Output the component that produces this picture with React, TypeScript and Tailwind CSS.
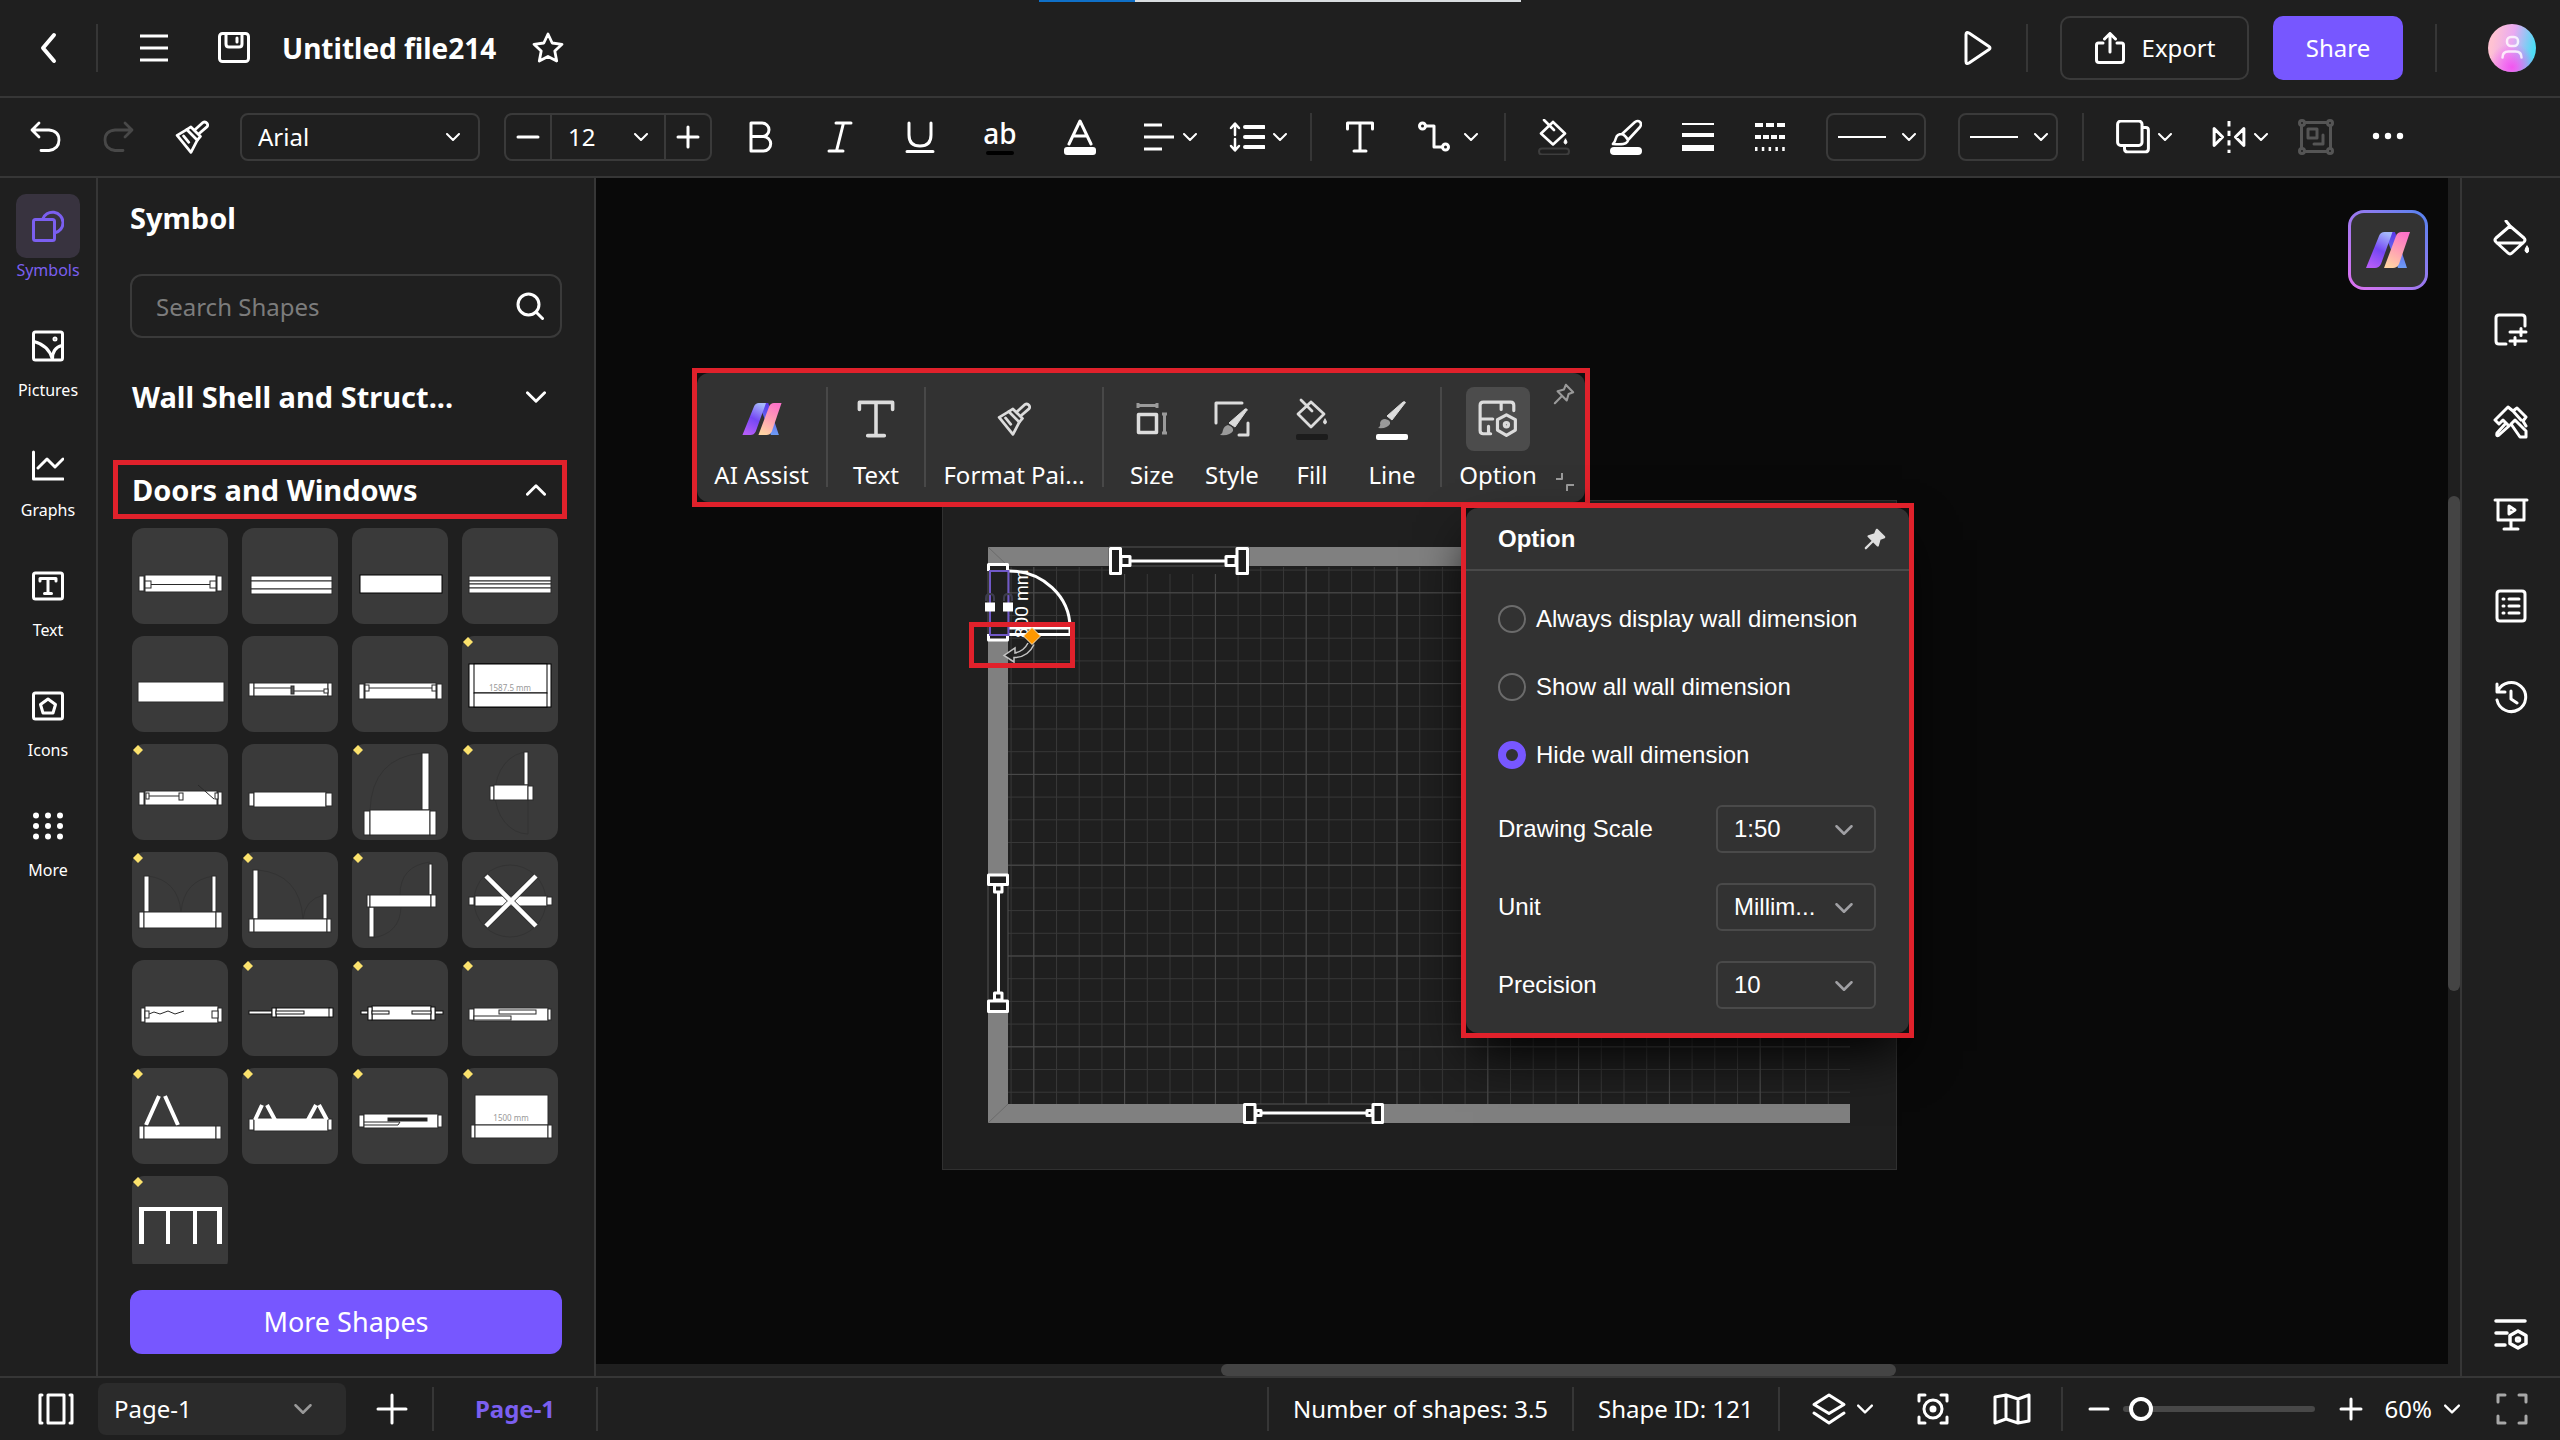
import type { ReactNode } from "react";

type IconProps = { children: ReactNode; className?: string; sw?: number; box?: string };

function Icon({ children, className = "size-8", sw = 3, box = "0 0 32 32" }: IconProps) {
  return (
    <svg
      viewBox={box}
      className={`shrink-0 ${className}`}
      fill="none"
      stroke="currentColor"
      strokeWidth={sw}
      strokeLinecap="round"
      strokeLinejoin="round"
      aria-hidden="true"
    >
      {children}
    </svg>
  );
}

function Chevron({ className = "h-2 w-3.5", up = false }: { className?: string; up?: boolean }) {
  return (
    <Icon box="0 0 14 8" sw={2} className={`pointer-events-none ${className}`}>
      <path d={up ? "M1 7 7 1l6 6" : "M1 1l6 6 6-6"} />
    </Icon>
  );
}

function Divider({ className = "h-12" }: { className?: string }) {
  return <div className={`w-0.5 shrink-0 bg-[#363636] ${className}`} />;
}

function Tool({ label, width = "w-20", children }: { label: string; width?: string; children: ReactNode }) {
  return (
    <button type="button" aria-label={label} className={`flex h-12 shrink-0 items-center justify-center gap-2 ${width}`}>
      {children}
    </button>
  );
}

function AiMark({ className, id }: { className: string; id: string }) {
  return (
    <svg viewBox="0 0 44 36" className={`shrink-0 ${className}`} aria-hidden="true">
      <defs>
        <linearGradient id={`${id}-a`} x1="0.7" y1="0" x2="0.3" y2="1">
          <stop offset="0" stopColor="#a5b8fb" />
          <stop offset="0.5" stopColor="#7547f5" />
          <stop offset="1" stopColor="#b45cf8" />
        </linearGradient>
        <linearGradient id={`${id}-b`} x1="0.7" y1="0" x2="0.3" y2="1">
          <stop offset="0" stopColor="#fb72c8" />
          <stop offset="0.5" stopColor="#ff9fb4" />
          <stop offset="1" stopColor="#ffd3a3" />
        </linearGradient>
        <linearGradient id={`${id}-c`} x1="0" y1="0" x2="0" y2="1">
          <stop offset="0" stopColor="#5a35e8" />
          <stop offset="1" stopColor="#6d9cf5" />
        </linearGradient>
      </defs>
      <path d="M24 0h5l12 36h-9L22 10z" fill={`url(#${id}-c)`} />
      <path d="M13 4q1.500-4 5.500-4h8L15 32q-2 4-6 4H0z" fill={`url(#${id}-a)`} />
      <path d="M30 4q1.500-4 5.500-4H44L33 32q-2 4-6 4h-9z" fill={`url(#${id}-b)`} />
    </svg>
  );
}

function Brush() {
  return (
    <>
      <path d="M2 14.500 11 9l10 10-6 11.500z" />
      <path d="M11 9l4-2.500 9 9-3 3.500M8 15l5 6" />
      <path d="M18.500 9.500 26 2.500q2.500-1.500 4 .500t0 3.500L22.500 13" />
    </>
  );
}

function Header() {
  return (
    <header className="relative flex h-[98px] shrink-0 items-center border-b-2 border-[#363636]">
      <div className="absolute top-0 left-[1039px] flex h-0.5 w-[482px] bg-[#d9dcdf]">
        <div className="w-24 bg-[#0f70c8]" />
      </div>
      <button type="button" aria-label="Back" className="flex w-24 justify-center">
        <Icon sw={4}>
          <path d="M22 3 11 16l11 13" />
        </Icon>
      </button>
      <Divider />
      <div className="flex items-center pl-10">
        <button type="button" aria-label="Menu" className="mr-12">
          <Icon>
            <path d="M2 4h28M2 16h28M2 28h28" strokeLinecap="butt" />
          </Icon>
        </button>
        <button type="button" aria-label="Save" className="mr-8">
          <Icon>
            <rect x="1.500" y="1.500" width="29" height="28" rx="3" />
            <path d="M8 2v10q0 3 3 3h10q3 0 3-3V2M19 6v4" />
          </Icon>
        </button>
        <h1 className="text-[28px] leading-10 font-bold">Untitled file214</h1>
        <button type="button" aria-label="Favourite" className="ml-9">
          <Icon sw={2.800}>
            <path d="m16 2 4.200 9 9.800 1.300-7.200 6.800 1.900 9.900L16 24.500 7.300 29l1.900-9.900L2 12.300 11.800 11z" />
          </Icon>
        </button>
      </div>
      <div className="ml-auto flex items-center">
        <button type="button" aria-label="Play" className="mr-8">
          <Icon className="h-9 w-8" box="0 0 32 36">
            <path d="M4 4.500q0-3 3-1.500l20 13.500q2 1.500 0 3L7 33q-3 1.500-3-1.500z" />
          </Icon>
        </button>
        <Divider />
        <button
          type="button"
          className="ml-8 flex h-16 w-[189px] items-center justify-center gap-4 rounded-[10px] border-2 border-[#3a3a3a] text-2xl"
        >
          <Icon>
            <path d="M9 11H4.500q-2 0-2 2v15q0 2.500 2.500 2.500h22q2.500 0 2.500-2.500V13q0-2-2-2H23M16 20V2M10.500 7 16 1.500 21.500 7" />
          </Icon>
          Export
        </button>
        <button type="button" className="ml-6 h-16 w-[130px] rounded-[10px] bg-[#7757ff] text-2xl">
          Share
        </button>
        <Divider className="ml-8 h-12" />
        <button type="button" aria-label="Account" className="mr-6 ml-[51px]">
          <svg viewBox="0 0 48 48" className="size-12">
            <defs>
              <linearGradient id="av" x1="0" y1="0.300" x2="1" y2="0.500">
                <stop offset="0.100" stopColor="#ffc2d2" />
                <stop offset="0.500" stopColor="#e9a9f2" />
                <stop offset="0.950" stopColor="#4fdcf5" />
              </linearGradient>
              <radialGradient id="av2" cx="0.5" cy="0.900" r="0.500">
                <stop offset="0" stopColor="#f455f0" />
                <stop offset="1" stopColor="#f455f0" stopOpacity="0" />
              </radialGradient>
            </defs>
            <circle cx="24" cy="24" r="24" fill="url(#av)" />
            <circle cx="24" cy="24" r="24" fill="url(#av2)" />
            <g fill="none" stroke="#fff" strokeOpacity="0.800" strokeWidth="2.500" strokeLinecap="round">
              <rect x="19" y="13" width="11" height="9" rx="4" />
              <path d="M14.500 33.500q0-6 6-6h7q6 0 6 6" />
            </g>
          </svg>
        </button>
      </div>
    </header>
  );
}

function LineSelect({ label }: { label: string }) {
  return (
    <button
      type="button"
      aria-label={label}
      className="flex h-12 w-[100px] shrink-0 items-center justify-between rounded-lg border-2 border-[#3a3a3a] pr-2 pl-2.5"
    >
      <span className="h-0.5 w-12 bg-white" />
      <Chevron />
    </button>
  );
}

function Toolbar() {
  return (
    <div className="flex h-20 shrink-0 items-center border-b-2 border-[#363636] pl-2.5">
      <Tool label="Undo" width="w-[72px]">
        <Icon sw={2.800}>
          <path d="M9 2 2 9l7 7M2 9h17q10 1 10 10t-10 10.500h-8" />
        </Icon>
      </Tool>
      <div className="text-[#484848]">
        <Tool label="Redo" width="w-[72px]">
          <Icon sw={2.800}>
            <path d="m23 2 7 7-7 7M30 9H13Q3 10 3 19t10 10.500h8" />
          </Icon>
        </Tool>
      </div>
      <Tool label="Format painter" width="w-[76px]">
        <Icon className="size-[34px]" sw={2.600}>
          <Brush />
        </Icon>
      </Tool>
      <div className="relative ml-2.5 shrink-0">
        <select
          aria-label="Font family"
          className="h-12 w-60 appearance-none rounded-lg border-2 border-[#3a3a3a] bg-transparent px-4 text-2xl"
        >
          <option>Arial</option>
        </select>
        <Chevron className="absolute top-5 right-5 h-2 w-3.5" />
      </div>
      <div className="ml-6 flex h-12 w-[208px] shrink-0 items-stretch rounded-lg border-2 border-[#3a3a3a]">
        <button type="button" aria-label="Smaller" className="flex w-11 items-center justify-center">
          <Icon className="size-6" box="0 0 24 24">
            <path d="M2 12h20" />
          </Icon>
        </button>
        <div className="relative flex-1 border-x-2 border-[#3a3a3a]">
          <select aria-label="Font size" className="h-full w-full appearance-none bg-transparent pl-4 text-2xl">
            <option>12</option>
          </select>
          <Chevron className="absolute top-[18px] right-4 h-2 w-3.5" />
        </div>
        <button type="button" aria-label="Larger" className="flex w-11 items-center justify-center">
          <Icon className="size-6" box="0 0 24 24">
            <path d="M2 12h20M12 2v20" />
          </Icon>
        </button>
      </div>
      <div className="ml-2 flex">
        <Tool label="Bold">
          <Icon>
            <path d="M7 2h11a7 6.800 0 0 1 0 13.600H7zM7 15.600h12.500a7 7 0 0 1 0 14.400H7z" />
          </Icon>
        </Tool>
        <Tool label="Italic">
          <Icon>
            <path d="M12 2h15M5 30h14M19.500 2l-7 28" />
          </Icon>
        </Tool>
        <Tool label="Underline">
          <Icon>
            <path d="M5 2v12q0 11 11 11t11-11V2M3 30.500h26" />
          </Icon>
        </Tool>
        <Tool label="Highlight">
          <span className="flex h-9 flex-col items-center justify-between">
            <span className="text-[28px] leading-7 font-medium">ab</span>
            <span className="h-1 w-7 rounded-sm bg-black" />
          </span>
        </Tool>
        <Tool label="Font color">
          <Icon className="h-9 w-8" box="0 0 32 36">
            <path d="M5 25 16 2l11 23M9.500 17h13" />
            <rect x="0" y="28" width="32" height="8" rx="3" fill="currentColor" stroke="none" />
          </Icon>
        </Tool>
      </div>
      <div className="ml-1.5 flex">
        <Tool label="Align" width="w-[88px]">
          <Icon>
            <path d="M1 4h18M1 16h30M1 28h18" strokeLinecap="butt" />
          </Icon>
          <Chevron />
        </Tool>
        <Tool label="Line spacing" width="w-[88px]">
          <Icon className="h-8 w-9" box="0 0 36 32">
            <path d="M16 6h19M16 16h19M16 26h19" strokeWidth="4" />
            <path d="M6 14V3M2 7l4-4.500L10 7M6 18v11M2 25l4 4.500 4-4.500" strokeWidth="2.500" />
          </Icon>
          <Chevron />
        </Tool>
      </div>
      <Divider className="ml-2 h-12" />
      <div className="ml-2 flex">
        <Tool label="Text">
          <Icon>
            <path d="M3.500 8V2h25v6M16 2v28M10 30h12" />
          </Icon>
        </Tool>
        <Tool label="Connector" width="w-24">
          <Icon className="mr-1.5 size-8">
            <circle cx="4.500" cy="5" r="3" />
            <circle cx="27.500" cy="26" r="3" />
            <path d="M8 5h8v21h8" />
          </Icon>
          <Chevron />
        </Tool>
      </div>
      <Divider className="ml-2 h-12" />
      <div className="ml-3 flex">
        <Tool label="Fill" width="w-[72px]">
          <Icon className="h-9 w-8" box="0 0 32 36" sw={2.600}>
            <path d="M15 3 27 14.500 15 25.500 3 14.500 15 3M6 1l10 10" />
            <path d="M27.500 20q3 4 0 5-3-1 0-5" fill="currentColor" strokeWidth="1" />
            <rect x="1" y="29.500" width="30" height="6" rx="3" stroke="#3d3d3d" strokeWidth="2" />
          </Icon>
        </Tool>
        <Tool label="Line color" width="w-[72px]">
          <Icon className="h-9 w-8" box="0 0 32 36" sw={2.600}>
            <path d="M12 15 25 3q3-2 5 0t0 5L18 21M12 15q3 1 6 6M12 15q-5 0-6 4-1 4-3 6 10 1 13-1 2-1 2-3" />
            <rect x="0" y="28" width="32" height="8" rx="4" fill="currentColor" stroke="none" />
          </Icon>
        </Tool>
        <Tool label="Line weight" width="w-[72px]">
          <Icon>
            <g strokeLinecap="butt">
              <path d="M0 3h32" strokeWidth="2" />
              <path d="M0 14h32" strokeWidth="4" />
              <path d="M0 27h32" strokeWidth="6" />
            </g>
          </Icon>
        </Tool>
        <Tool label="Line style" width="w-[72px]">
          <Icon sw={4}>
            <g strokeLinecap="butt">
              <path d="M1 4h30" strokeDasharray="8 3" />
              <path d="M1 16h30" strokeDasharray="6 2" />
              <path d="M1 28h30" strokeDasharray="2.500 4.300" />
            </g>
          </Icon>
        </Tool>
      </div>
      <div className="ml-5 flex gap-8">
        <LineSelect label="Line type" />
        <LineSelect label="Arrow type" />
      </div>
      <Divider className="ml-6 h-12" />
      <div className="ml-3 flex">
        <Tool label="Arrange" width="w-24">
          <Icon className="size-[34px]" sw={2.800}>
            <rect x="1.500" y="1" width="23" height="23" rx="3" />
            <path d="M25 7h3q2.500 0 2.500 2.500V27q0 3-3 3H11q-3 0-3-3v-2.500" />
          </Icon>
          <Chevron />
        </Tool>
        <Tool label="Flip" width="w-24">
          <Icon className="size-[34px]" sw={2.800}>
            <path d="M2 8v16l8-8zM30 8v16l-8-8z" />
            <path d="M16 1v30" strokeDasharray="5 4" strokeLinecap="butt" />
          </Icon>
          <Chevron />
        </Tool>
        <span className="text-[#555]">
          <Tool label="Group" width="w-14">
            <Icon className="size-9" box="0 0 36 36">
              <path d="M7 3.500h22M7 32.500h22M3.500 7v22M32.500 7v22" />
              <circle cx="4" cy="4" r="2.500" />
              <circle cx="32" cy="4" r="2.500" />
              <circle cx="4" cy="32" r="2.500" />
              <circle cx="32" cy="32" r="2.500" />
              <path d="M10 10h9v9h-9zM25 16v9h-9" />
            </Icon>
          </Tool>
        </span>
        <Tool label="More tools" width="w-[88px]">
          <Icon>
            <g fill="currentColor" stroke="none">
              <circle cx="4" cy="15" r="3.200" />
              <circle cx="16" cy="15" r="3.200" />
              <circle cx="28" cy="15" r="3.200" />
            </g>
          </Icon>
        </Tool>
      </div>
    </div>
  );
}

const railItems: { label: string; active?: boolean; icon: ReactNode }[] = [
  {
    label: "Symbols",
    active: true,
    icon: (
      <>
        <rect x="1.500" y="9.500" width="21" height="21" rx="2" />
        <path d="M10.500 9.500A10.500 10.500 0 1 1 22.500 23" />
      </>
    ),
  },
  {
    label: "Pictures",
    icon: (
      <>
        <rect x="1.500" y="2" width="29" height="28" rx="2" />
        <path d="M2 11.500q15 4 18.500 18Q20 18 30 15.500" />
        <circle cx="23" cy="9" r="1" />
      </>
    ),
  },
  { label: "Graphs", icon: <path d="M1.500 2v27H31M6 18l9-9 8 8 8-8" /> },
  {
    label: "Text",
    icon: (
      <>
        <rect x="1.500" y="3" width="29" height="26" rx="2" />
        <path d="M8 11V8.500h16V11M16 8.500v15M12.500 23.500h7" />
      </>
    ),
  },
  {
    label: "Icons",
    icon: (
      <>
        <rect x="1.500" y="3" width="29" height="26" rx="2" />
        <path d="m16 9 7.500 5.500L21 23H11l-2.500-8.500z" />
      </>
    ),
  },
  {
    label: "More",
    icon: (
      <g fill="currentColor" stroke="none">
        {[4, 16, 28].map((x) => [5.500, 16, 26.500].map((y) => <circle key={`${x}-${y}`} cx={x} cy={y} r="3" />))}
      </g>
    ),
  },
];

function Rail() {
  return (
    <nav className="flex w-[98px] shrink-0 flex-col border-r-2 border-[#363636] pt-4">
      {railItems.map((it) => (
        <button
          type="button"
          key={it.label}
          className={`flex h-[120px] flex-col items-center text-base ${it.active ? "text-[#7b5ff0]" : "text-white"}`}
        >
          <span className={`flex size-16 items-center justify-center rounded-[10px] ${it.active ? "bg-[#38333f]" : ""}`}>
            <Icon>{it.icon}</Icon>
          </span>
          {it.label}
        </button>
      ))}
    </nav>
  );
}

type BoxSpec = [number, number, number, number];

function Boxes({ list, stroke = "#2a2a2a" }: { list: BoxSpec[]; stroke?: string }) {
  return (
    <>
      {list.map(([x1, y1, x2, y2], i) => (
        <rect key={i} x={x1} y={y1} width={x2 - x1} height={y2 - y1} fill="#fff" stroke={stroke} />
      ))}
    </>
  );
}

const faint = "#333";

const symbols: { name: string; tag?: boolean; art: ReactNode }[] = [
  {
    name: "Window",
    art: (
      <>
        <Boxes list={[[7, 48, 12, 63], [13, 47, 84, 64], [85, 48, 90, 63], [13, 53, 19, 60], [78, 53, 84, 60]]} />
        <path d="M19 56.500h59" />
      </>
    ),
  },
  { name: "Glazed wall", art: <Boxes list={[[9, 48, 90, 53], [9, 53, 90, 61], [9, 61, 90, 66]]} /> },
  { name: "Opening", art: <Boxes stroke="#000" list={[[8, 47, 90, 65]]} /> },
  { name: "Casement", art: <Boxes list={[[7, 48, 89, 53], [7, 53, 89, 56], [7, 56, 89, 60], [7, 60, 89, 65]]} /> },
  { name: "Wall opening", art: <Boxes list={[[6, 46, 92, 66]]} /> },
  {
    name: "Sliding window",
    art: (
      <>
        <Boxes list={[[7, 47, 12, 60], [12, 47, 86, 60], [86, 47, 90, 60], [82, 53, 86, 57]]} />
        <path d="M12 52h37M52 55h30" />
        <rect x="49" y="50" width="3" height="8" fill="#555" />
      </>
    ),
  },
  {
    name: "Bay window",
    art: (
      <>
        <Boxes list={[[7, 48, 12, 63], [13, 47, 84, 63], [85, 48, 90, 63], [13, 49, 17, 55], [80, 49, 84, 55]]} />
        <path d="M17 52h63" />
      </>
    ),
  },
  {
    name: "Garage window",
    tag: true,
    art: (
      <>
        <Boxes stroke="#000" list={[[7, 28, 89, 71], [12, 28, 85, 57], [12, 57, 85, 71]]} />
        <text x="48" y="55" textAnchor="middle" fontSize="8" fill="#999" stroke="none">1587.5 mm</text>
      </>
    ),
  },
  {
    name: "Tilt window",
    tag: true,
    art: (
      <>
        <Boxes list={[[7, 48, 12, 61], [13, 47, 85, 61], [86, 48, 90, 61], [14, 49, 17, 55], [47, 49, 51, 56], [83, 49, 86, 55]]} />
        <path d="M17 52h30M66 41l16 14" />
      </>
    ),
  },
  { name: "Plain window", art: <Boxes list={[[7, 49, 12, 62], [12, 48, 84, 63], [84, 49, 90, 62]]} /> },
  {
    name: "Door",
    tag: true,
    art: (
      <>
        <path d="M70 9Q20 14 18 66" stroke={faint} />
        <Boxes list={[[70, 9, 77, 66], [12, 67, 18, 91], [18, 66, 78, 91], [78, 67, 84, 91]]} />
      </>
    ),
  },
  {
    name: "Swing door",
    tag: true,
    art: (
      <>
        <path d="M66 8A33 41 0 0 0 66 90V56" stroke={faint} />
        <Boxes list={[[62, 8, 66, 41], [28, 42, 32, 56], [32, 41, 66, 56], [66, 42, 71, 56]]} />
      </>
    ),
  },
  {
    name: "Double door",
    tag: true,
    art: (
      <>
        <path d="M16 24q30 4 33 36 3-32 33-36" stroke={faint} />
        <Boxes list={[[12, 24, 17, 60], [80, 24, 84, 60], [7, 60, 12, 76], [12, 60, 84, 76], [84, 60, 90, 76]]} />
      </>
    ),
  },
  {
    name: "Uneven double door",
    tag: true,
    art: (
      <>
        <path d="M16 18q42 4 45 49 2-20 21-24" stroke={faint} />
        <Boxes list={[[11, 18, 16, 67], [81, 42, 85, 67], [7, 67, 12, 80], [12, 67, 85, 80], [85, 67, 89, 80]]} />
      </>
    ),
  },
  {
    name: "Opposing door",
    tag: true,
    art: (
      <>
        <path d="M78 10Q48 14 48 43M20 86q28-4 29-31" stroke={faint} />
        <Boxes list={[[77, 12, 80, 43], [17, 55, 22, 85], [15, 43, 18, 55], [18, 43, 79, 55], [79, 43, 84, 55]]} />
      </>
    ),
  },
  {
    name: "Revolving door",
    art: (
      <>
        <circle cx="48" cy="49" r="36" stroke={faint} />
        <Boxes list={[[7, 45, 12, 53], [13, 44, 85, 54], [85, 45, 90, 53]]} />
        <path d="m24 24 50 50M74 24 24 74" stroke="#333" strokeWidth="6" />
        <path d="m24 24 50 50M74 24 24 74" stroke="#fff" strokeWidth="4.500" />
      </>
    ),
  },
  {
    name: "Folding screen",
    art: (
      <>
        <Boxes list={[[9, 48, 13, 62], [13, 46, 86, 63], [86, 48, 90, 62], [13, 51, 17, 58], [80, 51, 86, 58]]} />
        <path d="m17 54 5-2 6 2 8-3 7 3 9-3" />
      </>
    ),
  },
  {
    name: "Pocket door",
    tag: true,
    art: <Boxes stroke="#111" list={[[7, 51, 30, 54], [34, 48, 88, 57], [30, 48, 34, 57], [34, 51, 62, 54], [87, 48, 91, 57]]} />,
  },
  {
    name: "Double pocket door",
    tag: true,
    art: (
      <Boxes
        stroke="#111"
        list={[[9, 51, 16, 54], [83, 51, 91, 54], [20, 46, 79, 60], [16, 47, 20, 60], [79, 47, 83, 60], [20, 51, 37, 54], [60, 51, 79, 54]]}
      />
    ),
  },
  {
    name: "Sliding door",
    tag: true,
    art: <Boxes list={[[7, 49, 12, 60], [12, 48, 86, 61], [86, 49, 89, 60], [37, 50, 74, 54], [12, 56, 49, 60]]} />,
  },
  {
    name: "Folding door",
    tag: true,
    art: (
      <>
        <path d="m14 57 13-29M33 28l13 29" stroke="#fff" strokeWidth="4" />
        <Boxes list={[[7, 58, 12, 71], [12, 58, 84, 71], [84, 58, 89, 71]]} />
      </>
    ),
  },
  {
    name: "Double folding door",
    tag: true,
    art: (
      <>
        <Boxes list={[[7, 51, 12, 62], [12, 50, 86, 63], [86, 51, 90, 62]]} />
        <path d="m13 52 7-15M25 37l8 15M66 52l8-15M77 37l8 15" stroke="#fff" strokeWidth="4" />
      </>
    ),
  },
  {
    name: "Bypass door",
    tag: true,
    art: (
      <>
        <Boxes list={[[7, 47, 12, 59], [12, 46, 86, 60], [86, 47, 90, 59]]} />
        <rect x="36" y="50" width="39" height="3" fill="#222" />
        <path d="M12 54h36l-2 3H12" />
      </>
    ),
  },
  {
    name: "Garage door",
    tag: true,
    art: (
      <>
        <Boxes list={[[13, 27, 86, 57], [9, 57, 13, 70], [13, 57, 86, 70], [86, 57, 90, 70]]} />
        <text x="49" y="53" textAnchor="middle" fontSize="8" fill="#999" stroke="none">1500 mm</text>
      </>
    ),
  },
  {
    name: "Folding partition",
    tag: true,
    art: <path d="M7 31h83v37h-5V35H65v33h-4V35H38v33h-4V35H12v33H7z" fill="#fff" stroke="none" />,
  },
];

function SymbolPanel() {
  return (
    <aside className="flex w-[498px] shrink-0 flex-col border-r-2 border-[#363636] px-8">
      <h2 className="mt-5 text-[29px] leading-10 font-bold">Symbol</h2>
      <div className="relative mt-9">
        <input
          type="search"
          aria-label="Search Shapes"
          placeholder="Search Shapes"
          className="h-16 w-full rounded-xl border-2 border-[#3a3a3a] bg-transparent px-6 text-2xl placeholder:text-[#7c7c7c]"
        />
        <Icon className="absolute top-[18px] right-[18px] size-7" box="0 0 28 28">
          <circle cx="12.500" cy="12.500" r="10.500" />
          <path d="m20.500 20.500 6 6" />
        </Icon>
      </div>
      <button type="button" className="mt-7 -mr-1 -ml-[17px] flex h-[62px] shrink-0 items-center justify-between pr-5 pl-[19px] text-[29px] font-bold">
        Wall Shell and Struct...
        <Chevron className="h-3 w-5" />
      </button>
      <button
        type="button"
        className="mt-8 -mr-[5px] -ml-[17px] flex h-[59px] shrink-0 items-center justify-between border-[5px] border-[#e0212b] pr-4 pl-3.5 text-[29px] font-bold"
      >
        Doors and Windows
        <Chevron up className="h-3 w-5" />
      </button>
      <div className="mt-[9px] ml-0.5 grid h-[736px] shrink-0 grid-cols-[repeat(4,96px)] content-start gap-x-3.5 gap-y-3 overflow-hidden">
        {symbols.map((s) => (
          <button type="button" key={s.name} aria-label={s.name} className="size-24 rounded-xl bg-[#3a3a3a]">
            <svg viewBox="0 0 96 96" className="size-24" fill="none" stroke="#2a2a2a">
              {s.art}
              {s.tag && <path d="m6 1 5 5-5 5-5-5z" fill="#fbe26c" stroke="none" />}
            </svg>
          </button>
        ))}
      </div>
      <button type="button" className="mt-[26px] h-16 shrink-0 rounded-xl bg-[#7757ff] text-[27px]">
        More Shapes
      </button>
    </aside>
  );
}

function FloorPlan() {
  return (
    <svg viewBox="596 178 1864 1198" preserveAspectRatio="xMinYMin meet" className="absolute inset-0 h-full w-full" fill="none">
      <defs>
        <pattern id="minor" x="1033.300" y="592.300" width="22.700" height="22.700" patternUnits="userSpaceOnUse">
          <path d="M0 0H22.700M0 0V22.700" stroke="#373737" strokeWidth="2" />
        </pattern>
        <pattern id="major" x="1033.300" y="592.300" width="90.800" height="90.800" patternUnits="userSpaceOnUse">
          <path d="M0 0H90.800M0 0V90.800" stroke="#4a4a4a" strokeWidth="2" />
        </pattern>
      </defs>
      <rect x="942.500" y="500.500" width="954" height="669" fill="#1f1f1f" stroke="#303030" />
      <rect x="1008" y="567" width="842" height="537" fill="url(#minor)" />
      <rect x="1008" y="567" width="842" height="537" fill="url(#major)" />
      <path d="M1850 547H988v576h862v-19H1008V566h842z" fill="#808080" />
      <path d="m988 547 20 19M988 1123l20-19" stroke="#6b6b6b" />
      <path d="M1109 547h140v19h-140zM988 875h20v137h-20zM1245 1104h138v19h-138zM988 566h20v73h-20z" fill="#1f1f1f" stroke="#555" />
      <path d="M1120 567h117v7h-117z" fill="#1f1f1f" />
      <g stroke="#fff" strokeWidth="3" fill="#1f1f1f" strokeLinejoin="round">
        <path d="M1110.500 548.500h10v25h-10zM1121 556.500h9v9h-9zM1131 561h95M1226 556.500h10v9h-10zM1237 548.500h10.500v25H1237z" />
        <path d="M988.500 875h19v9.500h-19zM994.500 885h7.500v7h-7.500zM998.500 893v100M994.500 993h7.500v7h-7.500zM988.500 1001h19v10.500h-19z" />
        <path d="M1244.500 1104.500h10.500v18h-10.500zM1256 1110.500h5v5h-5zM1261 1113h106M1367 1110.500h5v5h-5zM1373 1104.500h9.500v18h-9.500z" />
        <path d="M988.500 571v-6.500h19v6.500M988.500 634v6h19v-6" />
        <path d="M1009 571A61 57 0 0 1 1070 628M1008 628h62v6.500h-62" fill="none" />
      </g>
      <text
        x="0"
        y="0"
        transform="translate(1028 638) rotate(-90)"
        fill="#fff"
        fontSize="19"
        className="font-['Liberation_Sans',sans-serif]"
      >
        800 mm
      </text>
      <rect x="990" y="571" width="18.500" height="64" stroke="#7058c8" strokeWidth="2" />
      <path d="M986 601v-3q0-4 4-4t4 4v3M1004 601v-3q0-4 4-4t4 4v3" stroke="#3d3d4d" strokeWidth="2" />
      <path d="M985 602.500h10v9h-10zM1003 602.500h10v9h-10z" fill="#fff" />
      <path d="M1028 643q-4 8-13 10v-5l-11 7.500 10 6.500v-4.500q14 0 20-13" fill="#222" stroke="#c4c4c4" strokeWidth="1.500" />
      <path d="m1032 627.500 8.500 8.500-8.500 8.500-8.500-8.500z" fill="#ff9800" stroke="#ffe7c2" />
      <rect x="971.500" y="624.500" width="101" height="41" stroke="#e0212b" strokeWidth="5" />
    </svg>
  );
}

function QuickItem({ label, width = "w-20", tile = "", children }: { label: string; width?: string; tile?: string; children: ReactNode }) {
  return (
    <button type="button" className={`flex shrink-0 flex-col items-center pt-3.5 text-2xl whitespace-nowrap ${width}`}>
      <span className={`flex size-16 items-center justify-center rounded-lg text-[#dcdcdc] ${tile}`}>{children}</span>
      <span className="mt-2">{label}</span>
    </button>
  );
}

function QuickBar() {
  return (
    <div className="absolute top-[190px] left-24 z-10 flex h-[139px] w-[898px] border-[5px] border-[#e0212b] bg-[#111]">
      <div className="relative flex flex-1 rounded-xl bg-[#323232]">
        <QuickItem label="AI Assist" width="w-[129px]">
          <AiMark id="q" className="h-8 w-10" />
        </QuickItem>
        <Divider className="mt-3.5 h-[100px] bg-[#484848]" />
        <QuickItem label="Text" width="w-24">
          <Icon className="size-[38px]">
            <path d="M2 8V2h28v6M16 2v28M9 30h14" />
          </Icon>
        </QuickItem>
        <Divider className="mt-3.5 h-[100px] bg-[#484848]" />
        <QuickItem label="Format Pai..." width="w-[176px]">
          <Icon className="size-[34px]" sw={2.600}>
            <Brush />
          </Icon>
        </QuickItem>
        <Divider className="mt-3.5 mr-2 h-[100px] bg-[#484848]" />
        <QuickItem label="Size">
          <Icon className="h-[34px] w-8" box="0 0 32 34">
            <path d="M2.500 12.500h18v18h-18z" strokeWidth="3.500" />
            <path d="M2 1v5M21 1v5M2 3.500h19M26 12h5M26 31h5M28.500 12v19" stroke="#9a9a9a" strokeLinecap="butt" />
          </Icon>
        </QuickItem>
        <QuickItem label="Style">
          <Icon className="size-9" box="0 0 36 36">
            <path d="M2 22V2h26M34 22v12H25" />
            <path d="M33 9 21 26l-6-4L31 8q2-1 2 1z" fill="currentColor" strokeWidth="1" />
            <path d="M14 24q6 2 5 6-3 5-13 4 3-2 3-5 1-4 5-5z" fill="#9a9a9a" stroke="none" />
          </Icon>
        </QuickItem>
        <QuickItem label="Fill">
          <Icon className="h-11 w-9" box="0 0 34 44" sw={2.800}>
            <path d="M16 5 29 17 16 30 3 17 16 5M6 3l11 11" />
            <path d="M30 22q3 4 0 5-3-1 0-5" fill="currentColor" strokeWidth="1" />
            <rect x="1" y="37" width="32" height="6" rx="2" fill="#1c1c1c" stroke="none" />
          </Icon>
        </QuickItem>
        <QuickItem label="Line">
          <Icon className="h-11 w-9" box="0 0 34 44">
            <path d="M30 6 17 23l-5-4L28 5q3-1 2 1z" fill="currentColor" strokeWidth="1" />
            <path d="M10 22q6 1 5 5-3 5-12 4 3-2 2-5 1-4 5-4z" fill="#9a9a9a" stroke="none" />
            <rect x="1" y="37" width="32" height="6" rx="2" fill="#fff" stroke="none" />
          </Icon>
        </QuickItem>
        <Divider className="mt-3.5 ml-2 h-[100px] bg-[#484848]" />
        <QuickItem label="Option" width="w-28" tile="bg-[#4c4c4c]">
          <Icon className="size-10" box="0 0 38 36">
            <path d="M12 32H5q-3 0-3-3V5q0-3 3-3h26q3 0 3 3v5M22 2v7M2 18h12M10 25v7" />
            <path d="m27 14 8.500 4.500v10L27 33.500l-8.500-5v-10z" />
            <circle cx="27" cy="23.500" r="2" />
          </Icon>
        </QuickItem>
        <button type="button" aria-label="Pin toolbar" className="absolute top-2.5 right-2.5 text-[#9a9a9a]">
          <Icon className="size-[22px]" box="0 0 24 24" sw={2.300}>
            <path d="m14 2 8 8-5 2-2 7-10-10 7-2zM9 15l-7 7" />
          </Icon>
        </button>
        <Icon className="absolute right-2.5 bottom-2.5 size-5 text-[#9a9a9a]" box="0 0 20 20" sw={2}>
          <path d="M7 1v6H1M12 19v-6h7" strokeLinecap="butt" />
        </Icon>
      </div>
    </div>
  );
}

function OptionSelect({ label, value }: { label: string; value: string }) {
  return (
    <label className="flex h-[78px] items-center justify-between">
      {label}
      <span className="relative">
        <select className="h-12 w-40 appearance-none rounded-md border-2 border-[#4a4a4a] bg-transparent px-4">
          <option>{value}</option>
        </select>
        <Chevron className="absolute top-5 right-[23px] h-2.5 w-[18px] text-[#a0a0a4]" />
      </span>
    </label>
  );
}

function OptionPanel() {
  const radios = ["Always display wall dimension", "Show all wall dimension", "Hide wall dimension"];
  return (
    <section className="absolute top-[325px] left-[865px] z-20 h-[535px] w-[453px] border-[5px] border-[#e0212b] bg-[#111] font-['Liberation_Sans',sans-serif] text-2xl shadow-2xl shadow-black">
      <div className="flex h-full flex-col rounded-xl bg-[#323232]">
        <div className="flex h-[63px] shrink-0 items-center justify-between border-b-2 border-[#4a4a4a] pr-[23px] pl-8">
          <h2 className="font-bold">Option</h2>
          <button type="button" aria-label="Pin panel" className="text-[#dedede]">
            <Icon className="size-[22px]" box="0 0 24 24" sw={2.500}>
              <path d="m14 2 8 8-5 2-2 7-10-10 7-2z" fill="currentColor" />
              <path d="m9 15-7 7" />
            </Icon>
          </button>
        </div>
        <div className="flex flex-col pt-3.5">
          {radios.map((r, i) => (
            <label key={r} className="flex h-[68px] items-center gap-2.5 pl-8">
              <input
                type="radio"
                name="dimension"
                defaultChecked={i === 2}
                className="size-7 shrink-0 appearance-none rounded-full border-2 border-[#6b6b6b] checked:border-8 checked:border-[#7757ff]"
              />
              {r}
            </label>
          ))}
        </div>
        <div className="flex flex-col pt-px pr-[33px] pl-8">
          <OptionSelect label="Drawing Scale" value="1:50" />
          <OptionSelect label="Unit" value="Millim..." />
          <OptionSelect label="Precision" value="10" />
        </div>
      </div>
    </section>
  );
}

const sideItems: { label: string; icon: ReactNode }[] = [
  {
    label: "Theme",
    icon: (
      <>
        <path d="M13 1l4 5M17 6 3 18q-2 2 0 4l12 11q2 2 4 0l12-11q2-2 0-4zM4 23h26" />
        <path d="M34 26q4 5 0 7-4-2 0-7" fill="currentColor" strokeWidth="1" />
      </>
    ),
  },
  {
    label: "Layout",
    icon: <path d="M13 32H6q-3 0-3-3V6q0-3 3-3h23q3 0 3 3v8M17 20h16M28 16.500v7M17 29h16M22 25.500v7" />,
  },
  {
    label: "Style",
    icon: <path d="M2 16 15 3l5 4 4-3 9 9-3 4 3 5M2 16l4 4 4-4 6 6L6 31q-3 2-2-2l9-10M20 7l8 9M18 20l4-4 11 11v6h-6z" />,
  },
  { label: "Present", icon: <path d="M2 4h32M5 4v20h26V4M18 24v9M11 33h14M16 10v8l6-4z" /> },
  {
    label: "Notes",
    icon: <path d="M7 3h22q3 0 3 3v24q0 3-3 3H7q-3 0-3-3V6q0-3 3-3zM10 11h1M16 11h10M10 18h1M16 18h10M10 25h1M16 25h10" />,
  },
  { label: "History", icon: <path d="M5 11A14.500 14.500 0 1 1 4 20M4 4v8h8M18 11v8l6 4" /> },
];

function SideRail() {
  return (
    <nav className="flex w-[100px] shrink-0 flex-col items-center border-l-2 border-[#363636] pt-3.5">
      {sideItems.map((s) => (
        <button type="button" key={s.label} aria-label={s.label} className="flex h-[92px] w-full items-center justify-center">
          <Icon className="size-9" box="0 0 36 36">
            {s.icon}
          </Icon>
        </button>
      ))}
      <button type="button" aria-label="Settings" className="mt-auto mb-6">
        <Icon className="size-9" box="0 0 36 36" sw={3.500}>
          <path d="M3 5h29M3 17h11M3 29h9" />
          <path d="m25 15 8 4.500v8L25 32l-8-4.500v-8z" />
          <circle cx="25" cy="23.500" r="1.500" />
        </Icon>
      </button>
    </nav>
  );
}

function Canvas() {
  return (
    <main className="relative flex-1 overflow-hidden bg-[#090909]">
      <FloorPlan />
      <QuickBar />
      <OptionPanel />
      <button
        type="button"
        aria-label="AI assistant"
        className="absolute top-8 right-8 size-20 rounded-2xl bg-linear-to-tr from-[#e070f0] via-[#9a78f0] to-[#4f83f0] p-[3px]"
      >
        <span className="flex h-full w-full items-center justify-center rounded-[13px] bg-[#333]">
          <AiMark id="c" className="h-9 w-11" />
        </span>
      </button>
      <div className="absolute right-0 bottom-0 left-0 h-3 bg-[#1f1f1f]">
        <div className="ml-[625px] h-3 w-[675px] rounded-md bg-[#444]" />
      </div>
      <div className="absolute top-0 right-0 bottom-0 w-3 bg-[#1f1f1f]">
        <div className="mt-[318px] h-[495px] w-3 rounded-md bg-[#444]" />
      </div>
    </main>
  );
}

function Footer() {
  return (
    <footer className="flex h-16 shrink-0 items-center border-t-2 border-[#363636] text-2xl whitespace-nowrap">
      <button type="button" aria-label="Page thumbnails" className="flex w-[98px] justify-center pl-3.5">
        <Icon className="h-8 w-9" box="0 0 36 32">
          <path d="M2 2v28M34 2v28M10 2h16v28H10zM2 2h2M32 2h2M2 30h2M32 30h2" />
        </Icon>
      </button>
      <div className="relative">
        <select aria-label="Page" className="h-[52px] w-[248px] appearance-none rounded-lg bg-[#2b2b2b] px-4">
          <option>Page-1</option>
        </select>
        <Chevron className="absolute top-[21px] right-[34px] h-2.5 w-[18px] text-[#999]" />
      </div>
      <button type="button" aria-label="Add page" className="flex w-[86px] justify-center pl-1.5">
        <Icon className="size-8">
          <path d="M2 16h28M16 2v28" />
        </Icon>
      </button>
      <Divider className="h-11" />
      <a href="#page-1" className="w-[162px] text-center font-bold text-[#7b5ff0]">
        Page-1
      </a>
      <Divider className="h-11" />
      <div className="ml-auto flex items-center">
        <Divider className="h-11" />
        <span className="px-6">Number of shapes: 3.5</span>
        <Divider className="h-11" />
        <span className="px-6">Shape ID: 121</span>
        <Divider className="h-11" />
        <button type="button" aria-label="Layers" className="ml-[31px] flex items-center gap-2.5">
          <Icon className="h-8 w-9" box="0 0 36 32">
            <path d="M18 2 33 11.500 18 20.500 3 11.500zM3 20l15 10 15-10" />
          </Icon>
          <Chevron className="h-2.5 w-4" />
        </button>
        <button type="button" aria-label="Focus" className="ml-11">
          <Icon>
            <path d="M2 8V2h6M24 2h6v6M30 24v6h-6M8 30H2v-6" />
            <circle cx="16" cy="16" r="9" />
            <circle cx="16" cy="16" r="2" fill="currentColor" />
          </Icon>
        </button>
        <button type="button" aria-label="Map" className="ml-11">
          <Icon className="h-8 w-[38px]" box="0 0 38 32">
            <path d="m2 4 11-2 12 4 11-4v26l-11 2-12-4-11 4zM13 2v24M25 6v24" />
          </Icon>
        </button>
        <Divider className="ml-[30px] h-11" />
        <button type="button" aria-label="Zoom out" className="ml-6">
          <Icon className="size-6" box="0 0 24 24">
            <path d="M3 12h18" />
          </Icon>
        </button>
        <input
          type="range"
          aria-label="Zoom"
          defaultValue={4}
          className="ml-3 h-1.5 w-[192px] appearance-none rounded-full bg-[#484848] [&::-webkit-slider-thumb]:size-6 [&::-webkit-slider-thumb]:appearance-none [&::-webkit-slider-thumb]:rounded-full [&::-webkit-slider-thumb]:border-4 [&::-webkit-slider-thumb]:border-white [&::-webkit-slider-thumb]:bg-[#1f1f1f]"
        />
        <button type="button" aria-label="Zoom in" className="ml-6">
          <Icon className="size-6" box="0 0 24 24">
            <path d="M2 12h20M12 2v20" />
          </Icon>
        </button>
        <button type="button" className="ml-[22px] flex items-center gap-3">
          60%
          <Chevron className="h-2.5 w-4" />
        </button>
        <button type="button" aria-label="Full screen" className="mr-8 ml-9 text-[#a8a8a8]">
          <Icon>
            <path d="M2 9V2h7M23 2h7v7M30 23v7h-7M9 30H2v-7" />
          </Icon>
        </button>
      </div>
    </footer>
  );
}

export default function App() {
  return (
    <div className="flex h-screen flex-col overflow-hidden bg-[#1f1f1f] font-['Noto_Sans',sans-serif] text-white">
      <Header />
      <Toolbar />
      <div className="flex min-h-0 flex-1">
        <Rail />
        <SymbolPanel />
        <Canvas />
        <SideRail />
      </div>
      <Footer />
    </div>
  );
}
